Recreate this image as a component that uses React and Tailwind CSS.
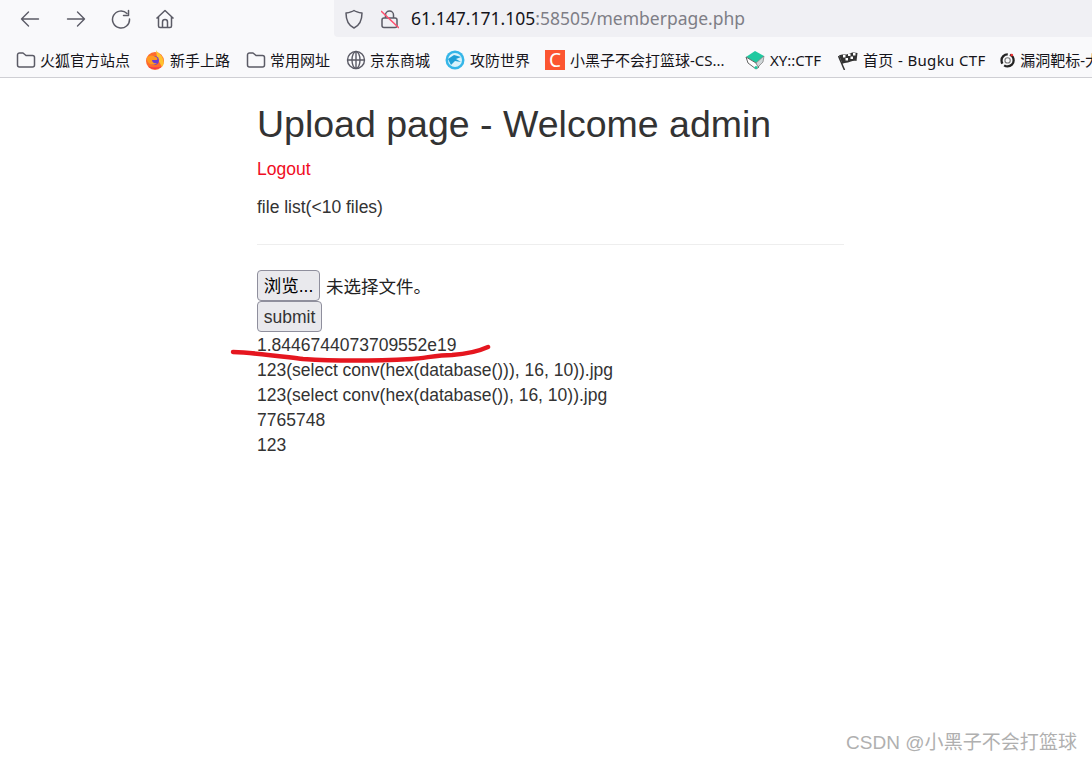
const sans = { fontFamily: '"Liberation Sans", "Noto Sans CJK SC", sans-serif' };

function FolderIcon() {
    return (
        <svg width="20" height="20" viewBox="0 0 20 20" fill="none" stroke="#5b5b66" strokeWidth="1.5" strokeLinejoin="round">
            <path d="M1.5 5a2 2 0 0 1 2-2h3.5l3 2.5h6.500a2 2 0 0 1 2 2V15a2 2 0 0 1-2 2h-13a2 2 0 0 1-2-2z" />
        </svg>
    );
}

function GlobeIcon() {
    return (
        <svg width="20" height="20" viewBox="0 0 20 20" fill="none" stroke="#5b5b66" strokeWidth="1.4">
            <circle cx="10" cy="10" r="8.500" />
            <ellipse cx="10" cy="10" rx="4" ry="8.500" />
            <path d="M1.500 10h17M10 1.500v17" />
        </svg>
    );
}

function FirefoxIcon() {
    return (
        <svg width="20" height="20" viewBox="0 0 20 20">
            <circle cx="10" cy="11" r="9" fill="#ff6b2c" />
            <path d="M11 0c1 3 6 4 7 9 1 3 1 6-1 8l-5-9z" fill="#ffc22e" />
            <circle cx="9.500" cy="10.500" r="4.500" fill="#6b3bd1" />
            <path d="M2 7c3-2 6-2 9 0 2 1 2 3 0 3H7c0 2 2 4 5 3-2 3-9 2-10-3z" fill="#ff9a1f" />
            <path d="M3 16c3 4 10 4 14 0-4 2-10 2-14 0z" fill="#f2304f" />
        </svg>
    );
}

function WorldIcon() {
    return (
        <svg width="20" height="20" viewBox="0 0 20 20">
            <circle cx="10" cy="10" r="9.500" fill="#35b6e8" />
            <circle cx="10" cy="10" r="7" fill="#d9f3fc" />
            <path d="M3 9l6-4 7 2-5 2 5 3-6-1-4 4z" fill="#1e9fd6" />
        </svg>
    );
}

function CsdnIcon() {
    return (
        <div className="w-5 h-5 bg-[#fc5531] flex items-center justify-center text-white text-[19px] leading-none">C</div>
    );
}

function XyIcon() {
    return (
        <svg width="20" height="20" viewBox="0 0 20 20">
            <path d="M1 7l9-6 9 5-8 7z" fill="#20c9a0" />
            <path d="M1 7l2 6 8 6 3-2-3-4z" fill="#fff" stroke="#666" strokeWidth="1" />
            <path d="M11 13l8-7-1 6-5 5z" fill="#cfd6d8" stroke="#666" strokeWidth="0.6" />
            <circle cx="11" cy="17.500" r="1.500" fill="#20c9a0" />
        </svg>
    );
}

function FlagIcon() {
    return (
        <svg width="20" height="20" viewBox="0 0 20 20">
            <path d="M0.500 6l6 14" stroke="#333" strokeWidth="1.500" />
            <path d="M1 5.500c4-2 6 0 9-1.500s6-2 9.500-1l-1 8c-4-1-6 1-8.500 1.500s-4 0-5.500 1.500z" fill="#333" />
            <rect x="5" y="5" width="2.500" height="2.500" fill="#fff" />
            <rect x="10" y="3.500" width="2.500" height="2.500" fill="#fff" />
            <rect x="15" y="3" width="2.500" height="2.500" fill="#fff" />
            <rect x="7.500" y="8" width="2.500" height="2.500" fill="#fff" />
            <rect x="12.500" y="6.500" width="2.500" height="2.500" fill="#fff" />
        </svg>
    );
}

function VulnIcon() {
    return (
        <svg width="20" height="20" viewBox="0 0 20 20">
            <circle cx="10" cy="10.500" r="8" fill="none" stroke="#222" strokeWidth="3" strokeDasharray="17 3" />
            <circle cx="10" cy="10.500" r="3.500" fill="none" stroke="#777" strokeWidth="1.500" />
            <circle cx="15.500" cy="3.500" r="1.800" fill="#e33" />
        </svg>
    );
}

const bookmarks = [
    { icon: <FolderIcon />, label: '火狐官方站点', width: 'w-[129px] gap-[4px]' },
    { icon: <FirefoxIcon />, label: '新手上路', width: 'w-[101px] gap-[5px]' },
    { icon: <FolderIcon />, label: '常用网址', width: 'w-[100px] gap-[4px]' },
    { icon: <GlobeIcon />, label: '京东商城', width: 'w-[99px] gap-[4px]' },
    { icon: <WorldIcon />, label: '攻防世界', width: 'w-[100px] gap-[5px]' },
    { icon: <CsdnIcon />, label: '小黑子不会打篮球-CS...', width: 'w-[200px] gap-[5px]' },
    { icon: <XyIcon />, label: 'XY::CTF', width: 'w-[93px] gap-[5px]' },
    { icon: <FlagIcon />, label: '首页 - Bugku CTF', width: 'w-[162px] gap-[5px] tracking-[0.35px]' },
    { icon: <VulnIcon />, label: '漏洞靶标-大', width: 'w-[100px] gap-[5px]' },
];

export default function App() {
    return (
        <div className="relative w-[1092px] h-[762px] overflow-hidden bg-white text-[#333]" style={sans}>

            {/* toolbar */}
            <div className="h-[37px] bg-[#f9f9fb] flex">
                <div className="w-[334px] flex items-center pl-[20px] gap-[25.500px]">
                    <svg width="20" height="20" viewBox="0 0 20 20" fill="none" stroke="#5b5b66" strokeWidth="1.400" strokeLinecap="round" strokeLinejoin="round">
                        <path d="M18.500 10H1.500M8.500 3l-7 7 7 7" />
                    </svg>
                    <svg width="20" height="20" viewBox="0 0 20 20" fill="none" stroke="#5b5b66" strokeWidth="1.400" strokeLinecap="round" strokeLinejoin="round">
                        <path d="M1.500 10h17M11.500 3l7 7-7 7" />
                    </svg>
                    <svg width="20" height="20" viewBox="0 0 20 20" fill="none" stroke="#5b5b66" strokeWidth="1.500" strokeLinecap="round" strokeLinejoin="round">
                        <path d="M16 4.500A8.500 8.500 0 1 0 18.500 10" />
                        <path d="M17.500 1.500v5h-5" />
                    </svg>
                    <svg className="-ml-[2px]" width="20" height="20" viewBox="0 0 20 20" fill="none" stroke="#5b5b66" strokeWidth="1.500" strokeLinejoin="round">
                        <path d="M1.500 9.500L10 1.500l8.500 8M3.500 8v9a1.500 1.500 0 0 0 1.500 1.500h10a1.500 1.500 0 0 0 1.500-1.500V8" />
                        <path d="M7.500 18.500V13a2.500 2.500 0 0 1 5 0v5.500" />
                    </svg>
                </div>
                <div className="flex-1 bg-[#f0f0f4] rounded-bl-[4px] flex items-center pl-[11px]">
                    <svg width="18" height="20" viewBox="0 0 18 20" fill="none" stroke="#5b5b66" strokeWidth="1.500" strokeLinejoin="round">
                        <path d="M9 1.500c2 1.500 4.500 2 8 2.500 0 7-1.500 12-8 15C2.500 16 1 11 1 4c3.500-.5 6-1 8-2.500z" />
                    </svg>
                    <svg className="ml-[18px]" width="18" height="20" viewBox="0 0 18 20" fill="none">
                        <rect x="1" y="9" width="15" height="9.500" rx="2" stroke="#5b5b66" strokeWidth="1.500" />
                        <path d="M4.500 9V6a4 4 0 0 1 8 0v3" stroke="#5b5b66" strokeWidth="1.500" />
                        <path d="M0 2l18 17" stroke="#ff4f6e" strokeWidth="1.600" />
                    </svg>
                    <div className="ml-[12px] text-[17.500px]" style={{ fontFamily: '"Noto Sans", sans-serif' }}>
                        <span className="text-[#15141a]">61.147.171.105</span>
                        <span className="text-[#7e7e86]">:58505/memberpage.php</span>
                    </div>
                </div>
            </div>

            {/* bookmarks */}
            <div className="h-[41px] pt-[6px] bg-[#f9f9fb] border-b border-[#cfcfd4] flex items-center pl-[16px] whitespace-nowrap text-[15px] text-[#15141a]" style={{ fontFamily: '"Noto Sans", "Noto Sans CJK SC", sans-serif' }}>
                {bookmarks.map((b) => (
                    <div key={b.label} className={`flex items-center shrink-0 ${b.width}`}>
                        {b.icon}
                        <span>{b.label}</span>
                    </div>
                ))}
            </div>

            {/* page */}
            <div className="ml-[257px] w-[587px] text-[17.500px] leading-[25px] text-[#333]">
                <h1 className="pt-[20px] text-[37.500px] leading-[52px] font-normal">Upload page - Welcome admin</h1>
                <a className="block mt-[7px] text-[#f00c23]">Logout</a>
                <p className="mt-[13px]">file list(&lt;10 files)</p>
                <hr className="mt-[24px] border-[#eeeeee]" />
                <div className="mt-[25px] h-[31px] flex items-center text-[#222]">
                    <button className="w-[63px] h-[31px] pt-[2px] bg-[#e9e9ed] border border-[#8f8f9d] rounded-[4px] text-[17.500px] text-black">浏览...</button>
                    <span className="ml-[6px] pt-[3px]">未选择文件。</span>
                </div>
                <button className="block w-[65px] h-[31px] pt-px bg-[#e9e9ed] border border-[#8f8f9d] rounded-[4px] text-[17.500px] text-[#333]">submit</button>
                <div className="mt-px">1.8446744073709552e19</div>
                <div>123(select conv(hex(database())), 16, 10)).jpg</div>
                <div>123(select conv(hex(database()), 16, 10)).jpg</div>
                <div>7765748</div>
                <div>123</div>
            </div>

            {/* red pen mark */}
            <svg className="absolute left-[225px] top-[335px]" width="270" height="30" viewBox="0 0 270 30" fill="none">
                <path d="M8 17c25 1 45 4 70 7 30 2 70 2 109 0 14-1 25-4 40-4 14-1 25-3 36-8" stroke="#e5161f" strokeWidth="4.500" strokeLinecap="round" strokeLinejoin="round" />
            </svg>

            {/* watermark */}
            <div className="absolute right-[15px] top-[730px] text-[19px] leading-[26px] tracking-[0.05px] text-[#b0b0b0]">CSDN @小黑子不会打篮球</div>
        </div>
    );
}
